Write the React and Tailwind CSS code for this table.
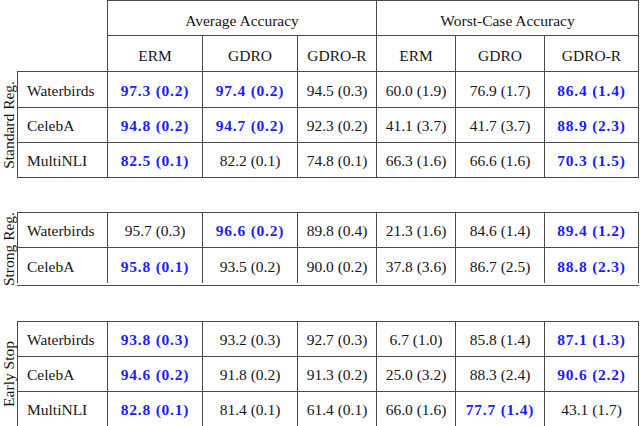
const widths = ['w-[95px]', 'w-[95px]', 'w-[79px]', 'w-[79px]', 'w-[89px]', 'w-[95px] border-r'];

const sections = [
  {
    label: 'Standard Reg.',
    mt: '',
    heights: ['h-[36px]', 'h-[35px]', 'h-[35px]'],
    rows: [
      ['Waterbirds', ['97.3 (0.2)', 1], ['97.4 (0.2)', 1], ['94.5 (0.3)'], ['60.0 (1.9)'], ['76.9 (1.7)'], ['86.4 (1.4)', 1]],
      ['CelebA', ['94.8 (0.2)', 1], ['94.7 (0.2)', 1], ['92.3 (0.2)'], ['41.1 (3.7)'], ['41.7 (3.7)'], ['88.9 (2.3)', 1]],
      ['MultiNLI', ['82.5 (0.1)', 1], ['82.2 (0.1)'], ['74.8 (0.1)'], ['66.3 (1.6)'], ['66.6 (1.6)'], ['70.3 (1.5)', 1]],
    ],
  },
  {
    label: 'Strong Reg.',
    mt: 'mt-[34px]',
    heights: ['h-[35px]', 'h-[36px]'],
    rows: [
      ['Waterbirds', ['95.7 (0.3)'], ['96.6 (0.2)', 1], ['89.8 (0.4)'], ['21.3 (1.6)'], ['84.6 (1.4)'], ['89.4 (1.2)', 1]],
      ['CelebA', ['95.8 (0.1)', 1], ['93.5 (0.2)'], ['90.0 (0.2)'], ['37.8 (3.6)'], ['86.7 (2.5)'], ['88.8 (2.3)', 1]],
    ],
  },
  {
    label: 'Early Stop',
    mt: 'mt-[35px]',
    heights: ['h-[35px]', 'h-[35px]', 'h-[35px]'],
    rows: [
      ['Waterbirds', ['93.8 (0.3)', 1], ['93.2 (0.3)'], ['92.7 (0.3)'], ['6.7 (1.0)'], ['85.8 (1.4)'], ['87.1 (1.3)', 1]],
      ['CelebA', ['94.6 (0.2)', 1], ['91.8 (0.2)'], ['91.3 (0.2)'], ['25.0 (3.2)'], ['88.3 (2.4)'], ['90.6 (2.2)', 1]],
      ['MultiNLI', ['82.8 (0.1)', 1], ['81.4 (0.1)'], ['61.4 (0.1)'], ['66.0 (1.6)'], ['77.7 (1.4)', 1], ['43.1 (1.7)']],
    ],
  },
];

function Cell({ value, bold, width }) {
  return (
    <div className={`${width} border-l border-t border-[#4a4a4a] flex items-center justify-center pt-[2px]`}>
      {bold ? (
        <span className="font-bold text-[#1c1cff] tracking-[0.05em]">{value}</span>
      ) : (
        <span>{value}</span>
      )}
    </div>
  );
}

export default function App() {
  return (
    <div className="w-[640px] h-[426px] bg-white text-[#161616] text-[15.5px] leading-none overflow-hidden font-['Liberation_Serif','Times_New_Roman',serif]">
      {/* Header */}
      <div className="flex flex-col pl-[107px]">
        <div className="flex h-[35px]">
          <div className="w-[269px] border-l border-t border-[#4a4a4a] flex items-center justify-center pt-[5px]">
            Average Accuracy
          </div>
          <div className="w-[263px] border-l border-t border-r border-[#4a4a4a] flex items-center justify-center pt-[5px]">
            Worst-Case Accuracy
          </div>
        </div>
        <div className="flex h-[36px]">
          {['ERM', 'GDRO', 'GDRO-R', 'ERM', 'GDRO', 'GDRO-R'].map((h, i) => (
            <div key={i} className={`${widths[i]} border-l border-t border-[#4a4a4a] flex items-center justify-center pt-[4px]`}>
              {h}
            </div>
          ))}
        </div>
      </div>

      {sections.map((s) => (
        <div key={s.label} className={`flex ${s.mt}`}>
          <div className="w-[17px] flex items-center justify-center">
            <span className="[writing-mode:vertical-rl] rotate-180 whitespace-nowrap pr-[1px]">{s.label}</span>
          </div>
          <div className="flex flex-col border-b border-[#4a4a4a]">
            {s.rows.map((r, ri) => (
              <div key={ri} className={`flex ${s.heights[ri]}`}>
                <div className="w-[90px] border-l border-t border-[#4a4a4a] flex items-center pl-[9px] pt-[2px]">
                  {r[0]}
                </div>
                {r.slice(1).map((c, ci) => (
                  <Cell key={ci} value={c[0]} bold={c[1]} width={widths[ci]} />
                ))}
              </div>
            ))}
          </div>
        </div>
      ))}
    </div>
  );
}
